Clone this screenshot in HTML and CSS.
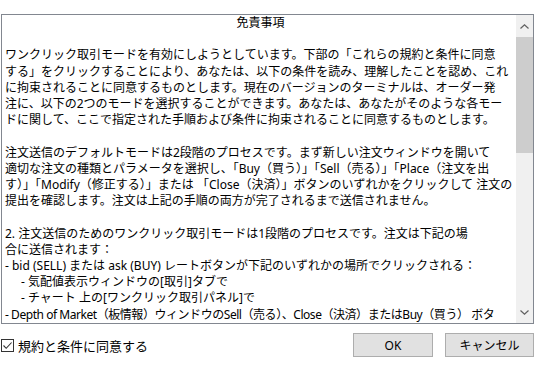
FILE: index.html
```html
<!DOCTYPE html>
<html lang="ja">
<head>
    <meta charset="UTF-8">
    <title>免責事項</title>
    <link rel="stylesheet" href="styles.css">
</head>
<body>
    <div class="dialog">
        <div class="terms">
            <div class="terms-text">
                <p class="title">免責事項</p>
                <p>
                    <span class="ln">ワンクリック取引モードを有効にしようとしています。下部の「これらの規約と条件に同意</span>
                    <span class="ln">する」をクリックすることにより、あなたは、以下の条件を読み、理解したことを認め、これ</span>
                    <span class="ln">に拘束されることに同意するものとします。現在のバージョンのターミナルは、オーダー発</span>
                    <span class="ln">注に、以下の2つのモードを選択することができます。あなたは、あなたがそのような各モー</span>
                    <span class="ln">ドに関して、ここで指定された手順および条件に拘束されることに同意するものとします。</span>
                </p>
                <p>
                    <span class="ln">注文送信のデフォルトモードは2段階のプロセスです。まず新しい注文ウィンドウを開いて</span>
                    <span class="ln">適切な注文の種類とパラメータを選択し、「Buy（買う）」「Sell（売る）」「Place（注文を出</span>
                    <span class="ln">す）」「Modify（修正する）」または 「Close（決済）」ボタンのいずれかをクリックして 注文の</span>
                    <span class="ln">提出を確認します。注文は上記の手順の両方が完了されるまで送信されません。</span>
                </p>
                <p>
                    <span class="ln">2. 注文送信のためのワンクリック取引モードは1段階のプロセスです。注文は下記の場</span>
                    <span class="ln">合に送信されます：</span>
                    <span class="ln">- bid (SELL) または ask (BUY) レートボタンが下記のいずれかの場所でクリックされる：</span>
                    <span class="ln sub">- 気配値表示ウィンドウの[取引]タブで</span>
                    <span class="ln sub">- チャート 上の[ワンクリック取引パネル]で</span>
                    <span class="ln tight">- Depth of Market（板情報）ウィンドウのSell（売る）、Close（決済）またはBuy（買う） ボタ</span>
                </p>
            </div>
            <div class="scrollbar">
                <div class="arrow">
                    <svg width="9" height="5" viewBox="0 0 9 5"><path d="M0.5 4.5 L4.5 0.8 L8.5 4.5" fill="none" stroke="#606060" stroke-width="1.2"/></svg>
                </div>
                <div class="track"><div class="thumb"></div></div>
                <div class="arrow">
                    <svg width="9" height="5" viewBox="0 0 9 5"><path d="M0.5 0.5 L4.5 4.2 L8.5 0.5" fill="none" stroke="#606060" stroke-width="1.2"/></svg>
                </div>
            </div>
        </div>
        <div class="footer">
            <label class="agree">
                <span class="check">
                    <svg width="11" height="11" viewBox="0 0 11 11"><path d="M1.5 5.5 L4.2 8.3 L9.6 2.5" fill="none" stroke="#333" stroke-width="1.1"/></svg>
                </span>
                規約と条件に同意する
            </label>
            <div class="buttons">
                <button class="btn btn-ok">OK</button>
                <button class="btn btn-cancel">キャンセル</button>
            </div>
        </div>
    </div>
</body>
</html>
```

FILE: styles.css
```css
body { margin: 0; background: #fff; font-family: "Noto Sans", "Noto Sans CJK JP", sans-serif; color: #000; }
.dialog { width: 533px; padding: 14px 0 0 1px; }
.terms { display: flex; height: 308px; border: 1px solid #828790; background: #fff; }
.terms-text { flex: 1; overflow: hidden; padding: 0 0 0 3px; font-size: 12px; line-height: 16.2px; }
.terms-text p { margin: 0 0 16.2px 0; }
.title { text-align: center; }
.ln { display: block; white-space: nowrap; }
.sub { padding-left: 16px; }
.tight { letter-spacing: -0.45px; }
.scrollbar { width: 17px; display: flex; flex-direction: column; background: #f0f0f0; }
.arrow { height: 22px; display: flex; align-items: center; justify-content: center; }
.track { flex: 1; }
.thumb { height: 116px; background: #cdcdcd; }
.footer { display: flex; justify-content: space-between; align-items: center; margin-top: 9px; }
.agree { display: flex; align-items: center; gap: 4px; font-size: 13px; }
.check { width: 11px; height: 11px; border: 1px solid #333; background: #fff; display: flex; }
.buttons { display: flex; gap: 12px; }
.btn { height: 24px; background: #e1e1e1; border: 1px solid #adadad; font-family: "Noto Sans", "Noto Sans CJK JP", sans-serif; font-size: 12px; color: #000; padding: 0; }
.btn-ok { width: 80px; }
.btn-cancel { width: 89px; }
```
